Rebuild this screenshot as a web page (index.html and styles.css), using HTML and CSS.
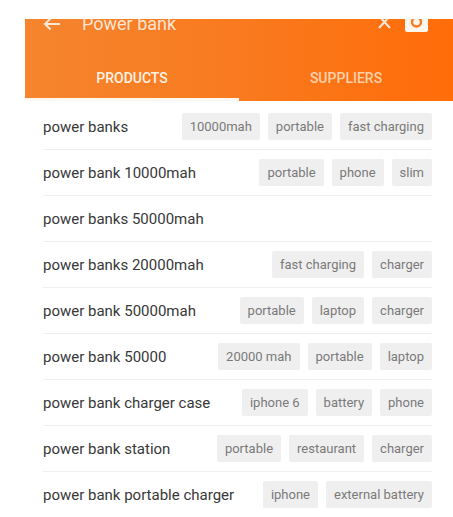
FILE: index.html
```html
<!DOCTYPE html>
<html>
<head>
<meta charset="utf-8">
<link rel="stylesheet" href="styles.css">
</head>
<body>
<div class="screen">
  <header class="header">
    <div class="searchbar">
      <svg class="icon-back" width="18" height="14" viewBox="0 0 18 14"><path d="M17 7H2M7.5 1.5L2 7l5.5 5.5" fill="none" stroke="#fde7d6" stroke-width="2"/></svg>
      <span class="query">Power bank</span>
      <svg class="icon-clear" width="15" height="14" viewBox="0 0 15 14"><path d="M2 1l11 12M13 1L2 13" fill="none" stroke="#fde7d6" stroke-width="2"/></svg>
      <svg class="icon-camera" width="23" height="22" viewBox="0 0 23 22"><rect x="0" y="0" width="23" height="22" rx="2" fill="#fff6ef"/><circle cx="11.5" cy="12" r="4.5" fill="none" stroke="#f97a20" stroke-width="2.4"/></svg>
    </div>
    <nav class="tabs">
      <div class="tab active">PRODUCTS</div>
      <div class="tab">SUPPLIERS</div>
    </nav>
  </header>
  <ul class="list">
    <li class="row"><span class="term">power banks</span><span class="chips"><span class="chip">10000mah</span><span class="chip">portable</span><span class="chip">fast charging</span></span></li>
    <li class="row"><span class="term">power bank 10000mah</span><span class="chips"><span class="chip">portable</span><span class="chip">phone</span><span class="chip">slim</span></span></li>
    <li class="row"><span class="term">power banks 50000mah</span><span class="chips"></span></li>
    <li class="row"><span class="term">power banks 20000mah</span><span class="chips"><span class="chip">fast charging</span><span class="chip">charger</span></span></li>
    <li class="row"><span class="term">power bank 50000mah</span><span class="chips"><span class="chip">portable</span><span class="chip">laptop</span><span class="chip">charger</span></span></li>
    <li class="row"><span class="term">power bank 50000</span><span class="chips"><span class="chip">20000 mah</span><span class="chip">portable</span><span class="chip">laptop</span></span></li>
    <li class="row"><span class="term">power bank charger case</span><span class="chips"><span class="chip">iphone 6</span><span class="chip">battery</span><span class="chip">phone</span></span></li>
    <li class="row"><span class="term">power bank station</span><span class="chips"><span class="chip">portable</span><span class="chip">restaurant</span><span class="chip">charger</span></span></li>
    <li class="row"><span class="term">power bank portable charger</span><span class="chips"><span class="chip">iphone</span><span class="chip">external battery</span></span></li>
  </ul>
</div>
</body>
</html>
```
FILE: styles.css
```css
html, body {
  margin: 0;
  padding: 0;
  background: #ffffff;
  font-family: Roboto, "Liberation Sans", Arial, sans-serif;
}
.screen {
  margin: 19px 0 0 25px;
  width: 428px;
  height: 498px;
  overflow: hidden;
  background: #fff;
}
.header {
  background: linear-gradient(90deg, #f5852e 0%, #f97a1f 50%, #ff6c08 100%);
}
.searchbar {
  display: flex;
  align-items: center;
  height: 56px;
  margin-top: -24px;
  padding: 0 25px 0 18px;
}
.icon-back {
  flex: none;
  margin-top: 2px;
}
.query {
  flex: 1;
  margin-left: 21px;
  font-size: 18px;
  color: rgba(255, 240, 228, 0.92);
}
.icon-clear {
  flex: none;
  margin-top: -2px;
}
.icon-camera {
  flex: none;
  margin-left: 13px;
  margin-top: -4px;
}
.tabs {
  display: flex;
  height: 50px;
}
.tab {
  flex: 1;
  display: flex;
  align-items: center;
  justify-content: center;
  font-size: 14px;
  font-weight: 500;
  color: rgba(255, 236, 220, 0.78);
  border-bottom: 3px solid transparent;
  padding-top: 6px;
  box-sizing: border-box;
}
.tab.active {
  color: #fff1e4;
  border-bottom-color: #fff8f0;
}
.list {
  list-style: none;
  margin: 0;
  padding: 3px 0 0;
}
.row {
  display: flex;
  align-items: center;
  justify-content: space-between;
  height: 45px;
  margin: 0 21px 0 18px;
  border-bottom: 1px solid #efefef;
}
.term {
  font-size: 15px;
  color: #383838;
  white-space: nowrap;
}
.chips {
  display: flex;
  gap: 8px;
}
.chip {
  display: flex;
  align-items: center;
  height: 27px;
  padding: 0 8px;
  background: #efefef;
  color: #7a7a7a;
  font-size: 13px;
  border-radius: 2px;
  white-space: nowrap;
}
```
